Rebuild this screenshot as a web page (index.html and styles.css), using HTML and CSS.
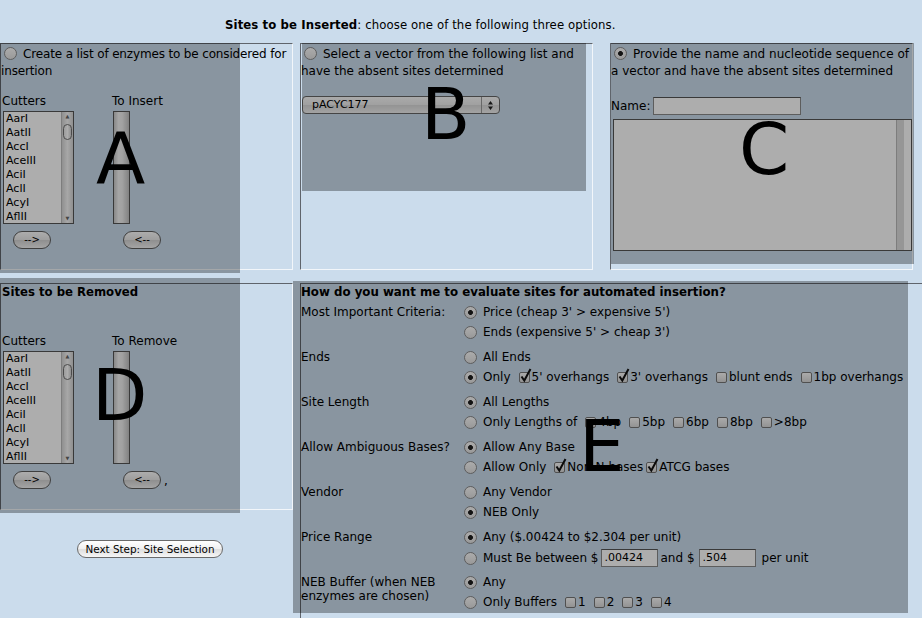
FILE: index.html
```html
<!DOCTYPE html>
<html>
<head>
<meta charset="utf-8">
<title>Sites</title>
<link rel="stylesheet" href="styles.css">
</head>
<body>
<div class="page">
  <div class="title"><b>Sites to be Inserted</b>: choose one of the following three options.</div>

  <div class="row1">
    <div class="cell cell-a">
      <p class="optpara tight-a"><span class="radio"></span>Create a list of enzymes to be considered for<br>insertion</p>
      <div class="picker picker-a">
        <div class="plabel">Cutters</div>
        <div class="plabel">To Insert</div>
        <div class="listbox">
          <div class="items">
            <div>AarI</div><div>AatII</div><div>AccI</div><div>AceIII</div><div>AciI</div><div>AclI</div><div>AcyI</div><div>AflII</div>
          </div>
          <div class="sb"><span class="arr">&#9650;</span><span class="thumb"></span><span class="fill"></span><span class="arr">&#9660;</span></div>
        </div>
        <div class="emptybox"></div>
        <div class="btncell"><span class="pill">--&gt;</span></div>
        <div class="btncell"><span class="pill">&lt;--</span></div>
      </div>
    </div>

    <div class="cell cell-b">
      <p class="optpara"><span class="radio"></span>Select a vector from the following list and<br>have the absent sites determined</p>
      <div class="select">
        <span class="val">pACYC177</span>
        <span class="arrows"><svg width="7" height="11" viewBox="0 0 7 11"><path d="M3.5 1 L6 4.5 L1 4.5 Z M3.5 10 L6 6.5 L1 6.5 Z" fill="#222"/></svg></span>
      </div>
    </div>

    <div class="cell cell-c">
      <p class="optpara"><span class="radio on"></span>Provide the name and nucleotide sequence of<br>a vector and have the absent sites determined</p>
      <div class="namerow">Name:<span class="textin name-in"></span></div>
      <div class="textarea"><span class="ta-sb"></span></div>
    </div>
  </div>

  <div class="row2">
    <div class="leftcol">
      <div class="cell cell-d">
        <div class="rmtitle">Sites to be Removed</div>
        <div class="picker picker-d">
          <div class="plabel">Cutters</div>
          <div class="plabel">To Remove</div>
          <div class="listbox">
            <div class="items">
              <div>AarI</div><div>AatII</div><div>AccI</div><div>AceIII</div><div>AciI</div><div>AclI</div><div>AcyI</div><div>AflII</div>
            </div>
            <div class="sb"><span class="arr">&#9650;</span><span class="thumb"></span><span class="fill"></span><span class="arr">&#9660;</span></div>
          </div>
          <div class="emptybox"></div>
          <div class="btncell"><span class="pill">--&gt;</span></div>
          <div class="btncell"><span class="pill">&lt;--</span><span class="comma">,</span></div>
        </div>
      </div>
      <div class="nextwrap"><span class="nextbtn">Next Step: Site Selection</span></div>
    </div>

    <div class="cell cell-e">
      <div class="eval">
        <div class="ehead">How do you want me to evaluate sites for automated insertion?</div>

        <div class="lbl">Most Important Criteria:</div>
        <div class="opts">
          <div class="line"><span class="radio on"></span>Price (cheap 3' &gt; expensive 5')</div>
          <div class="line"><span class="radio"></span>Ends (expensive 5' &gt; cheap 3')</div>
        </div>

        <div class="lbl">Ends</div>
        <div class="opts">
          <div class="line"><span class="radio"></span>All Ends</div>
          <div class="line"><span class="radio on"></span>Only<span class="cb on"><svg viewBox="0 0 13 15"><path d="M2.5 8.5 L5.3 12.5 L11.5 1" fill="none" stroke="#111" stroke-width="2"/></svg></span>5' overhangs<span class="cb on"><svg viewBox="0 0 13 15"><path d="M2.5 8.5 L5.3 12.5 L11.5 1" fill="none" stroke="#111" stroke-width="2"/></svg></span>3' overhangs<span class="cb"></span>blunt ends<span class="cb"></span>1bp overhangs</div>
        </div>

        <div class="lbl">Site Length</div>
        <div class="opts">
          <div class="line"><span class="radio on"></span>All Lengths</div>
          <div class="line"><span class="radio"></span>Only Lengths of<span class="cb"></span>4bp<span class="cb"></span>5bp<span class="cb"></span>6bp<span class="cb"></span>8bp<span class="cb"></span>&gt;8bp</div>
        </div>

        <div class="lbl">Allow Ambiguous Bases?</div>
        <div class="opts">
          <div class="line"><span class="radio on"></span>Allow Any Base</div>
          <div class="line"><span class="radio"></span>Allow Only<span class="cb on"><svg viewBox="0 0 13 15"><path d="M2.5 8.5 L5.3 12.5 L11.5 1" fill="none" stroke="#111" stroke-width="2"/></svg></span>Non-N bases<span class="cb on near"><svg viewBox="0 0 13 15"><path d="M2.5 8.5 L5.3 12.5 L11.5 1" fill="none" stroke="#111" stroke-width="2"/></svg></span>ATCG bases</div>
        </div>

        <div class="lbl">Vendor</div>
        <div class="opts">
          <div class="line"><span class="radio"></span>Any Vendor</div>
          <div class="line"><span class="radio on"></span>NEB Only</div>
        </div>

        <div class="lbl">Price Range</div>
        <div class="opts price">
          <div class="line"><span class="radio on"></span>Any ($.00424 to $2.304 per unit)</div>
          <div class="line tall"><span class="radio"></span>Must Be between $<span class="textin price-in">.00424</span><span class="and">and $</span><span class="textin price-in">.504</span><span class="per">per unit</span></div>
        </div>

        <div class="lbl">NEB Buffer (when NEB<br>enzymes are chosen)</div>
        <div class="opts">
          <div class="line"><span class="radio on"></span>Any</div>
          <div class="line"><span class="radio"></span>Only Buffers<span class="cb"></span>1<span class="cb"></span>2<span class="cb"></span>3<span class="cb"></span>4</div>
        </div>
      </div>
    </div>
  </div>

  <div class="shade shade-a"><span class="mark">A</span></div>
  <div class="shade shade-b"><span class="mark">B</span></div>
  <div class="shade shade-c"><span class="mark">C</span></div>
  <div class="shade shade-d"><span class="mark">D</span></div>
  <div class="shade shade-e"><span class="mark">E</span></div>
</div>
</body>
</html>
```

FILE: styles.css
```css
* { box-sizing: border-box; }
html, body { margin: 0; padding: 0; }
body {
  background: #cbdcec;
  font-family: "DejaVu Sans", "Noto Sans", sans-serif;
  font-size: 12px;
  color: #000;
  overflow: hidden;
}
.page {
  position: relative;
  width: 922px;
  height: 618px;
  overflow: hidden;
}
.title {
  height: 43px;
  padding: 17px 0 0 225px;
  font-family: "DejaVu Sans Condensed", "DejaVu Sans", sans-serif;
  font-size: 13px;
  letter-spacing: 0.1px;
  line-height: 16px;
  white-space: nowrap;
}

/* table cells */
.cell {
  border-top: 1px solid #5f646b;
  border-left: 1px solid #5f646b;
  border-right: 1px solid #f2f6fa;
  border-bottom: 1px solid #f2f6fa;
}
.row1 { display: flex; height: 227px; }
.cell-a { width: 293px; }
.cell-b { width: 293px; margin-left: 7px; }
.cell-c { width: 303px; margin-left: 17px; }

.optpara {
  margin: 0;
  padding-top: 2px;
  line-height: 17px;
  white-space: nowrap;
}
.tight-a { letter-spacing: -0.15px; }

.radio {
  display: inline-block;
  flex: none;
  width: 13px;
  height: 13px;
  border-radius: 50%;
  border: 1px solid #8a8a8a;
  background: linear-gradient(#fdfdfd, #e2e2e2);
  vertical-align: -2px;
  margin: 0 6px 0 3px;
}
.radio.on {
  background: radial-gradient(circle at 50% 50%, #1c1c1c 0 2.1px, transparent 2.7px), linear-gradient(#fdfdfd, #e2e2e2);
}

/* picker (cutters lists) */
.picker {
  display: grid;
  grid-template-columns: 110px 1fr;
}
.picker-a { margin-top: 13px; }
.picker-d { margin-top: 33px; }
.plabel { height: 18px; line-height: 17px; padding-left: 1px; }
.listbox {
  margin-left: 2px;
  width: 71px;
  height: 113px;
  border: 1px solid #555;
  background: #fff;
  display: flex;
  font-size: 11px;
  line-height: 14px;
  overflow: hidden;
}
.items { flex: 1; padding-left: 2px; }
.sb {
  width: 12px;
  border-left: 1px solid #b8b8b8;
  background: linear-gradient(to right, #d4d4d4, #f6f6f6 50%, #d4d4d4);
  display: flex;
  flex-direction: column;
  align-items: center;
}
.sb .arr { font-size: 5px; line-height: 9px; color: #666; }
.sb .thumb {
  width: 9px;
  height: 16px;
  margin-top: 3px;
  border: 1px solid #707070;
  border-radius: 5px;
  background: linear-gradient(to right, #e6e6e6, #ffffff 50%, #d0d0d0);
}
.sb .fill { flex: 1; }
.emptybox {
  margin-left: 2px;
  width: 17px;
  height: 113px;
  border: 1px solid #555;
  background: linear-gradient(to right, #c9c9c9, #f4f4f4 30%, #eeeeee 55%, #bfbfbf);
}
.btncell { margin-top: 7px; height: 18px; display: flex; align-items: flex-end; }
.pill {
  display: inline-block;
  margin-left: 12px;
  width: 38px;
  height: 18px;
  border-radius: 9px;
  border: 1px solid #5e5e5e;
  background: linear-gradient(#ffffff, #e8e8e8 50%, #d4d4d4 52%, #f2f2f2);
  font-size: 10px;
  line-height: 16px;
  text-align: center;
}
.comma { margin-left: 3px; line-height: 16px; }

/* cell B */
.select {
  margin: 16px 0 0 1px;
  width: 198px;
  height: 18px;
  border: 1px solid #666;
  border-radius: 4px;
  background: linear-gradient(#fbfbfb, #ececec 50%, #dadada 52%, #f0f0f0);
  display: flex;
  font-size: 11px;
  line-height: 16px;
}
.select .val { flex: 1; padding-left: 9px; }
.select .arrows {
  width: 18px;
  border-left: 1px solid #9a9a9a;
  display: flex;
  align-items: center;
  justify-content: center;
}
.select .arrows svg { display: block; }

/* cell C */
.namerow {
  margin-top: 17px;
  height: 18px;
  display: flex;
  align-items: center;
}
.textin {
  display: inline-block;
  flex: none;
  height: 18px;
  border: 1px solid #8a8a8a;
  border-top-color: #555;
  background: #fff;
  font-size: 11px;
  line-height: 16px;
  padding-left: 3px;
}
.name-in { width: 148px; margin-left: 3px; }
.textarea {
  margin: 4px 0 0 2px;
  width: 299px;
  height: 132px;
  border: 1px solid #555;
  background: #fff;
  display: flex;
  justify-content: flex-end;
}
.ta-sb {
  width: 15px;
  border-left: 1px solid #b9b9b9;
  background: linear-gradient(to right, #dedede 0 7px, #ffffff 7px);
}

/* row 2 */
.row2 { display: flex; margin-top: 13px; }
.leftcol { width: 293px; flex: none; }
.cell-d { height: 227px; }
.rmtitle { font-weight: bold; font-size: 11.7px; line-height: 16px; height: 16px; padding-left: 1px; }
.nextwrap { padding: 30px 0 0 77px; }
.nextbtn {
  display: inline-block;
  width: 146px;
  height: 18px;
  border-radius: 9px;
  border: 1px solid #6a6a6a;
  background: linear-gradient(#ffffff, #f0f0f0 50%, #dedede 52%, #f6f6f6);
  font-size: 10.4px;
  line-height: 16px;
  text-align: center;
}
.cell-e {
  margin-left: 7px;
  width: 640px;
  height: 345px;
  flex: none;
  border-right: none;
  border-bottom: none;
}
.eval {
  display: grid;
  grid-template-columns: 163px 1fr;
}
.ehead {
  grid-column: 1 / -1;
  height: 18px;
  line-height: 16px;
  font-weight: bold;
  font-size: 11.8px;
}
.lbl { padding-top: 3px; line-height: 14px; padding-bottom: 5px; }
.opts { padding-bottom: 5px; }
.opts.price { padding-bottom: 3px; }
.line {
  height: 20px;
  display: flex;
  align-items: center;
  white-space: nowrap;
}
.line.tall { height: 22px; }
.line .radio { margin: 0 6px 0 0; }
.cb {
  position: relative;
  display: inline-block;
  flex: none;
  width: 11px;
  height: 11px;
  border: 1px solid #777;
  border-radius: 2px;
  background: linear-gradient(#fbfbfb, #d9d9d9);
  margin: 0 2px 0 8px;
}
.cb.near { margin-left: 3px; }
.cb svg {
  position: absolute;
  left: -1px;
  top: -5px;
  width: 13px;
  height: 15px;
}
.price-in { width: 57px; margin-left: 2px; }
.and { margin: 0 2px 0 3px; }
.per { margin-left: 6px; }

/* annotation overlays */
.shade {
  position: absolute;
  background: rgba(0, 0, 0, 0.32);
  pointer-events: none;
}
.mark {
  position: absolute;
  font-family: "DejaVu Sans", sans-serif;
  font-size: 72px;
  line-height: 52px;
  color: #000;
}
.shade-a { left: 0; top: 43px; width: 240px; height: 230px; }
.shade-a .mark { left: 96px; top: 89px; }
.shade-b { left: 302px; top: 43px; width: 284px; height: 148px; }
.shade-b .mark { left: 119px; top: 45px; }
.shade-c { left: 611px; top: 43px; width: 303px; height: 221px; }
.shade-c .mark { left: 128px; top: 80px; }
.shade-d { left: 0; top: 278px; width: 240px; height: 235px; }
.shade-d .mark { left: 92px; top: 91px; }
.shade-e { left: 293px; top: 281px; width: 615px; height: 332px; }
.shade-e .mark { left: 286px; top: 139px; }
```
